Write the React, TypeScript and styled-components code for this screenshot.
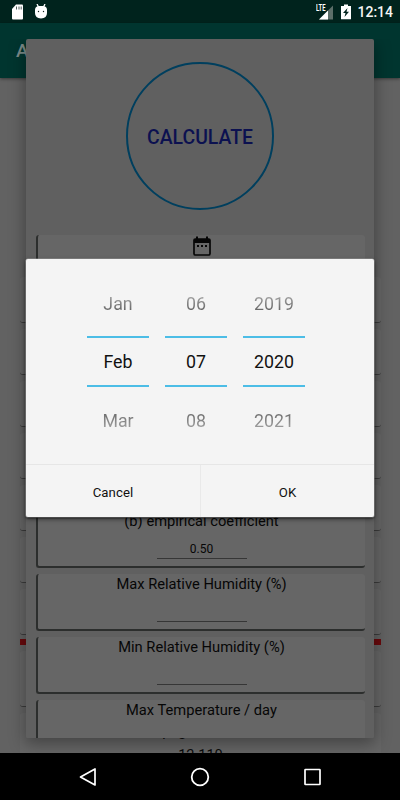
import React from "react";
import styled, { createGlobalStyle } from "styled-components";

const GlobalStyle = createGlobalStyle`
  * { box-sizing: border-box; }
  body { margin: 0; background: #000; font-family: Roboto, sans-serif; }
`;

const Screen = styled.div`
  position: relative;
  width: 400px;
  height: 800px;
  overflow: hidden;
  display: flex;
  flex-direction: column;
  background: #626262;
`;

const StatusBar = styled.header`
  height: 23px;
  flex: none;
  display: flex;
  align-items: center;
  justify-content: space-between;
  padding: 0 7px 0 11px;
  background: #00231d;
`;

const StatusGroup = styled.div<{ $gap: number }>`
  display: flex;
  align-items: center;
  gap: ${(p) => p.$gap}px;
  height: 23px;
`;

const Clock = styled.span`
  color: #f4f6f5;
  font-size: 14px;
  font-weight: 500;
  line-height: 23px;
  padding-top: 2px;
`;

const AppBar = styled.div`
  height: 55px;
  flex: none;
  padding: 0 16px;
  background: #00352f;
  color: #7b8a88;
  font-size: 19px;
  font-weight: 500;
  line-height: 56px;
  box-shadow: 0 1px 3px rgba(0, 0, 0, 0.45);
  z-index: 1;
`;

const Page = styled.main`
  flex: 1;
  min-height: 0;
  overflow: hidden;
  display: flex;
  flex-direction: column;
  gap: 6px;
  padding: 199px 19px 0 20px;
`;

const PageCard = styled.section<{ $height: number }>`
  flex: none;
  height: ${(p) => p.$height}px;
  border-bottom: 1px solid #3b3b3b;
  border-radius: 3px;
  background: #666;
  color: #0a0a0a;
  text-align: center;
  font-size: 14.5px;
  line-height: 17px;
`;

const LastCardText = styled.div`
  padding: 10px 0 7px;
`;

const RedBar = styled.div`
  flex: none;
  height: 6px;
  margin: -2px 0 0;
  background: #690a0d;
`;

const NavBar = styled.nav`
  height: 47px;
  flex: none;
  display: flex;
  justify-content: center;
  align-items: center;
  gap: 92px;
  background: #000;
  z-index: 1;
`;

const Sheet = styled.div`
  position: absolute;
  z-index: 2;
  left: 26px;
  top: 39px;
  width: 348px;
  height: 699px;
  overflow: hidden;
  border-radius: 2px;
  padding: 23px 9px 0 10px;
  background: #606060;
`;

const SheetShadow = styled.div`
  position: absolute;
  z-index: 1;
  left: 26px;
  top: 39px;
  width: 348px;
  height: 699px;
  border-radius: 2px;
  box-shadow: 0 5px 16px 1px rgba(0, 0, 0, 0.34);
  clip-path: inset(0 -26px -15px -26px);
`;

const CalculateButton = styled.button`
  display: block;
  width: 148px;
  height: 148px;
  margin: 0 0 25px 90px;
  padding: 2px 0 0;
  border: 2px solid #003f5e;
  border-radius: 50%;
  background: transparent;
  color: #0c1150;
  font: 500 19.4px Roboto, sans-serif;
`;

const FormList = styled.div`
  display: flex;
  flex-direction: column;
  gap: 6px;
`;

const FormCard = styled.section<{ $height?: number }>`
  flex: none;
  height: ${(p) => p.$height ?? 57}px;
  display: flex;
  flex-direction: column;
  align-items: center;
  border-left: 2px solid #2c2e2d;
  border-bottom: 2px solid #2c2e2d;
  border-radius: 3px;
  background: #666;
`;

const FieldLabel = styled.label`
  color: #060606;
  font-size: 14.7px;
  line-height: 18px;
  padding-top: 1px;
  white-space: nowrap;
`;

const FieldValue = styled.div`
  width: 90px;
  height: 29px;
  border-bottom: 1px solid #363636;
  color: #060606;
  font-size: 12px;
  line-height: 14px;
  padding-top: 12px;
  text-align: center;
`;

const DateDialog = styled.div`
  position: absolute;
  z-index: 3;
  left: 26px;
  top: 259px;
  width: 348px;
  height: 258px;
  display: flex;
  flex-direction: column;
  border-radius: 2px;
  background: #f4f4f4;
  box-shadow: 0 0 0 0.6px rgba(200, 200, 200, 0.6), 0 1px 2px rgba(0, 0, 0, 0.9), 0 2px 5px rgba(0, 0, 0, 0.5);
`;

const Pickers = styled.div`
  flex: 1;
  display: flex;
  justify-content: center;
  gap: 16px;
  padding: 19px 8px 0 0;
`;

const PickerColumn = styled.div`
  width: 62px;
  display: flex;
  flex-direction: column;
  align-items: center;
  text-align: center;
  font-size: 17.8px;
`;

const Selected = styled.div`
  width: 62px;
  height: 51px;
  margin-top: 7px;
  border: solid #4cbde6;
  border-width: 2px 0;
  color: #111;
  line-height: 48px;
`;

const Neighbour = styled.div<{ $fade: "up" | "down" }>`
  height: 51px;
  line-height: 52px;
  color: transparent;
  background: ${(p) =>
    p.$fade === "up"
      ? "linear-gradient(#a2a2a2 18px, #606060 34px)"
      : "linear-gradient(#6c6c6c 18px, #a2a2a2 34px)"};
  background-clip: text;
  -webkit-background-clip: text;
`;

const NextValue = styled(Neighbour)`
  margin-top: 8px;
`;

const Actions = styled.div`
  height: 53px;
  flex: none;
  display: grid;
  grid-template-columns: 1fr 1fr;
  border-top: 1px solid #e6e6e6;
`;

const ActionButton = styled.button`
  border: 0;
  padding: 2px 0 0;
  background: transparent;
  color: #111;
  font: 400 13.2px Roboto, sans-serif;
  letter-spacing: 0.1px;

  & + & {
    border-left: 1px solid #e9e9e9;
  }
`;

const IconLabel = styled.div`
  display: flex;
  padding-top: 1px;
`;

const backgroundCards = [46, 46, 46, 46, 46, 46, 46];

const fields = [
  { label: "(b) empirical coefficient", value: "0.50" },
  { label: "Max Relative Humidity (%)", value: "" },
  { label: "Min Relative Humidity (%)", value: "" },
  { label: "Max Temperature / day", value: "" },
];

const dateColumns = [
  ["Jan", "Feb", "Mar"],
  ["06", "07", "08"],
  ["2019", "2020", "2021"],
];

const SdCardIcon = () => (
  <svg width="13" height="16" viewBox="0 0 13 16">
    <path d="M5 .5h6q1 0 1 1v13q0 1-1 1H2q-1 0-1-1V5z" fill="#fff" />
    <path d="M5.5 2.5v3M8 2.5v3M10.2 2.5v3" stroke="#52605d" strokeWidth="1" />
  </svg>
);

const RobotIcon = () => (
  <svg width="14" height="16" viewBox="0 0 14 16">
    <path d="M3 0 4.5 3M11 0 9.5 3" stroke="#fff" strokeWidth="1.3" />
    <path d="M1 6q0-3.5 3.5-4h5Q13 2.5 13 6v3q0 5-6 5.5Q1 14 1 9z" fill="#fff" />
    <circle cx="4.5" cy="7.5" r=".7" fill="#14231f" />
    <circle cx="9.5" cy="7.5" r=".7" fill="#14231f" />
  </svg>
);

const SignalIcon = () => (
  <svg width="18" height="16" viewBox="0 0 18 16">
    <path d="M17 1.5v14H3z" fill="#5c6e69" />
    <path d="M12 6.5v9H3z" fill="#fff" />
    <path d="M0 0h10v7H0z" fill="#00231d" />
    <text x="0" y="7" fill="#fff" fontFamily="Roboto" fontSize="8.5" fontWeight="700" textLength="9.5" lengthAdjust="spacingAndGlyphs">
      LTE
    </text>
  </svg>
);

const BatteryIcon = () => (
  <svg width="12" height="16" viewBox="0 0 12 16">
    <path d="M1 2h3V.5h4V2h3v13.3H1z" fill="#fff" />
    <path d="M7.5 4 3 9h2.5L4.5 13 9 7.8H6.5z" fill="#00231d" />
  </svg>
);

const CalendarIcon = () => (
  <svg width="18" height="20" viewBox="0 0 18 20">
    <rect x="1" y="3" width="16" height="16" rx="1.3" fill="none" stroke="#060606" strokeWidth="1.7" />
    <path d="M1 3h16v4H1zM3 .5h2V4H3zM13 .5h2V4h-2zM4 9h2v2H4zM8 9h2v2H8zM12 9h2v2h-2z" fill="#060606" />
  </svg>
);

export default function App() {
  return (
    <>
      <GlobalStyle />
      <Screen>
        <StatusBar>
          <StatusGroup $gap={10}>
            <SdCardIcon />
            <RobotIcon />
          </StatusGroup>
          <StatusGroup $gap={5.5}>
            <SignalIcon />
            <BatteryIcon />
            <Clock>12:14</Clock>
          </StatusGroup>
        </StatusBar>
        <AppBar>A</AppBar>
        <Page>
          {backgroundCards.map((height, i) => (
            <PageCard key={i} $height={height} />
          ))}
          <RedBar />
          <PageCard $height={56} />
          <PageCard $height={100}>
            <LastCardText>Seepage flow value</LastCardText>
            <div>12.110</div>
          </PageCard>
        </Page>
        <NavBar>
          <svg width="20" height="20" viewBox="0 0 20 20" fill="none" stroke="#fff" strokeWidth="1.7">
            <path d="M17 2v16L2.5 10z" strokeLinejoin="round" />
          </svg>
          <svg width="20" height="20" viewBox="0 0 20 20" fill="none" stroke="#fff" strokeWidth="1.8">
            <circle cx="10" cy="10" r="8.3" />
          </svg>
          <svg width="20" height="20" viewBox="0 0 20 20" fill="none" stroke="#fff" strokeWidth="1.7">
            <rect x="3" y="2.5" width="15" height="15" rx=".5" />
          </svg>
        </NavBar>
        <SheetShadow />
        <Sheet>
          <CalculateButton>CALCULATE</CalculateButton>
          <FormList>
            <FormCard $height={270}>
              <IconLabel>
                <CalendarIcon />
              </IconLabel>
            </FormCard>
            {fields.map(({ label, value }) => (
              <FormCard key={label}>
                <FieldLabel>{label}</FieldLabel>
                <FieldValue>{value}</FieldValue>
              </FormCard>
            ))}
          </FormList>
        </Sheet>
        <DateDialog role="dialog">
          <Pickers>
            {dateColumns.map(([previous, selected, next]) => (
              <PickerColumn key={selected}>
                <Neighbour $fade="up">{previous}</Neighbour>
                <Selected>{selected}</Selected>
                <NextValue $fade="down">{next}</NextValue>
              </PickerColumn>
            ))}
          </Pickers>
          <Actions>
            <ActionButton>Cancel</ActionButton>
            <ActionButton>OK</ActionButton>
          </Actions>
        </DateDialog>
      </Screen>
    </>
  );
}
